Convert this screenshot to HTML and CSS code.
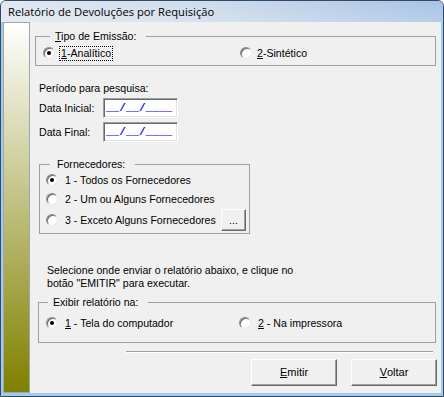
FILE: index.html
```html
<!DOCTYPE html>
<html lang="pt">
<head>
<meta charset="utf-8">
<title>Relatório de Devoluções por Requisição</title>
<link rel="stylesheet" href="styles.css">
</head>
<body>
<div class="window">
  <div class="titlebar">Relatório de Devoluções por Requisição</div>
  <div class="client">
    <div class="strip"></div>
    <div class="content">
      <fieldset class="group g-tipo">
        <legend class="lg-tipo"><u>T</u>ipo de Emissão:</legend>
        <div class="radios two-tipo">
          <div class="radio"><span class="dot on"></span><span class="label focus"><u>1</u>-Analítico</span></div>
          <div class="radio"><span class="dot"></span><span class="label"><u>2</u>-Sintético</span></div>
        </div>
      </fieldset>

      <div class="periodo">
        <div class="plabel">Período para pesquisa:</div>
        <div class="drow first"><span class="dlabel">Data Inicial:</span><span class="dinput">__/__/____</span></div>
        <div class="drow"><span class="dlabel">Data Final:</span><span class="dinput">__/__/____</span></div>
      </div>

      <fieldset class="group g-forn">
        <legend class="lg-forn">Fornecedores:</legend>
        <div class="forn-list">
          <div class="radio frow r1"><span class="dot on"></span><span class="label">1 - Todos os Fornecedores</span></div>
          <div class="radio frow r2"><span class="dot"></span><span class="label">2 - Um ou Alguns Fornecedores</span></div>
          <div class="radio frow r3"><span class="dot"></span><span class="label">3 - Exceto Alguns Fornecedores</span><span class="btn small">...</span></div>
        </div>
      </fieldset>

      <p class="info">Selecione onde enviar o relatório abaixo, e clique no<br>botão "EMITIR" para executar.</p>

      <fieldset class="group g-exib">
        <legend class="lg-exib">Exibir relatório na:</legend>
        <div class="radios two-exib">
          <div class="radio"><span class="dot on"></span><span class="label"><u>1</u> - Tela do computador</span></div>
          <div class="radio"><span class="dot"></span><span class="label"><u>2</u> - Na impressora</span></div>
        </div>
      </fieldset>

      <div class="separator"></div>

      <div class="actions">
        <span class="btn big"><u>E</u>mitir</span>
        <span class="btn big"><u>V</u>oltar</span>
      </div>
    </div>
  </div>
</div>
</body>
</html>
```

FILE: styles.css
```css
* { box-sizing: border-box; }
html, body { margin: 0; padding: 0; }
body {
  width: 444px;
  height: 397px;
  overflow: hidden;
  background: #ffffff;
  font-family: "Liberation Sans", Arial, sans-serif;
  font-size: 10.6px;
  color: #000;
}
u { text-decoration: underline; text-underline-offset: 1px; }

.window {
  width: 444px;
  height: 397px;
  border: 1px solid #2f4b68;
  border-radius: 6px 6px 0 0;
  background: #a3cbea;
  padding: 0 2px 3px 2px;
  display: flex;
  flex-direction: column;
}

.titlebar {
  height: 21px;
  margin: 0 -2px;
  padding-left: 7px;
  border-radius: 5px 5px 0 0;
  font-family: "Open Sans", "Noto Sans", sans-serif;
  font-size: 11.2px;
  line-height: 21px;
  color: #000;
  background:
    linear-gradient(to bottom, rgba(255,255,255,0.0), rgba(255,255,255,0.18)),
    linear-gradient(to right, #e0e7ef 0%, #cfdceb 45%, #a8c3e4 100%);
}

.client {
  flex: 1;
  display: flex;
  background: #f0f0f0;
}

.strip {
  width: 27px;
  flex: none;
  margin-right: 1px;
  border: 1px solid #9ea6ae;
  background: linear-gradient(to bottom, #ffffff 0%, #808000 100%);
}

.content {
  flex: 1;
  display: flex;
  flex-direction: column;
}

/* group boxes */
.group {
  margin: 0;
  padding: 0;
  border: 1px solid #a0a0a0;
  min-width: 0;
}
.group legend {
  line-height: 13px;
  height: 13px;
  padding: 0;
}
.g-tipo { margin: 8px 5px 0 4px; padding: 0 0 4px 7px; }
.lg-tipo { margin-left: 7px; padding: 0 10px 0 5px !important; }
.g-forn { margin: 16px 0 0 8px; width: 211px; padding: 0 3px 2px 6px; }
.lg-forn { margin-left: 4px; padding: 0 10px 0 7px !important; }
.g-exib { margin: 6px 5px 0 7px; padding: 0 0 5px 7px; }
.lg-exib { margin-left: 2px; padding: 0 10px 0 5px !important; }

.radios { display: grid; }
.two-tipo { grid-template-columns: 197px auto; margin-top: 2px; height: 16px; align-items: center; }
.two-exib { grid-template-columns: 193px auto; height: 28px; align-items: center; }

.radio { display: flex; align-items: center; }
.dot {
  position: relative;
  flex: none;
  width: 12px;
  height: 12px;
  border-radius: 50%;
  background: #ffffff;
  border: 1px solid;
  border-color: #8a8a8a #e8e8e8 #e8e8e8 #8a8a8a;
  box-shadow: inset 1px 1px 0 #6a6a6a;
}
.dot.on::after {
  content: "";
  position: absolute;
  left: 3px;
  top: 3px;
  width: 4px;
  height: 4px;
  border-radius: 50%;
  background: #000;
}
.label { line-height: 13px; white-space: nowrap; }
.two-tipo .label { margin-left: 5px; }
.two-tipo .label.focus { margin-left: 4px; border: 1px dotted #000; padding: 0 1px; }
.forn-list .label, .two-exib .label { margin-left: 7px; }

.forn-list { display: flex; flex-direction: column; }
.frow.r1 { height: 18px; }
.frow.r2 { height: 20px; }
.frow.r3 { height: 22px; }

/* period */
.periodo { margin: 16px 0 0 8px; }
.plabel { line-height: 13px; }
.drow { display: flex; align-items: center; margin-top: 4px; }
.drow.first { margin-top: 3px; }
.dlabel { width: 64px; line-height: 13px; }
.dinput {
  width: 75px;
  height: 20px;
  background: #ffffff;
  border: 1px solid;
  border-color: #a0a0a0 #ffffff #ffffff #a0a0a0;
  box-shadow: inset 1px 1px 0 #696969, inset -1px -1px 0 #e3e3e3;
  color: #0000ff;
  font-family: "Liberation Mono", "Courier New", monospace;
  font-size: 11px;
  line-height: 18px;
  padding-left: 2px;
  font-weight: bold;
}

.info {
  margin: 30px 0 0 16px;
  line-height: 13px;
}

.separator {
  margin: 8px 8px 0 95px;
  height: 2px;
  border-top: 1px solid #a0a0a0;
  border-bottom: 1px solid #ffffff;
}

.actions {
  display: flex;
  justify-content: flex-end;
  gap: 14px;
  margin: 6px 4px 0 0;
}

.btn {
  display: flex;
  align-items: center;
  justify-content: center;
  background: #f0f0f0;
  border: 1px solid;
  border-color: #ffffff #696969 #696969 #ffffff;
  box-shadow: inset -1px -1px 0 #a0a0a0;
  line-height: 13px;
}
.btn.big { width: 86px; height: 27px; font-size: 11px; }
.btn.small { width: 25px; height: 22px; margin-left: auto; }
```
